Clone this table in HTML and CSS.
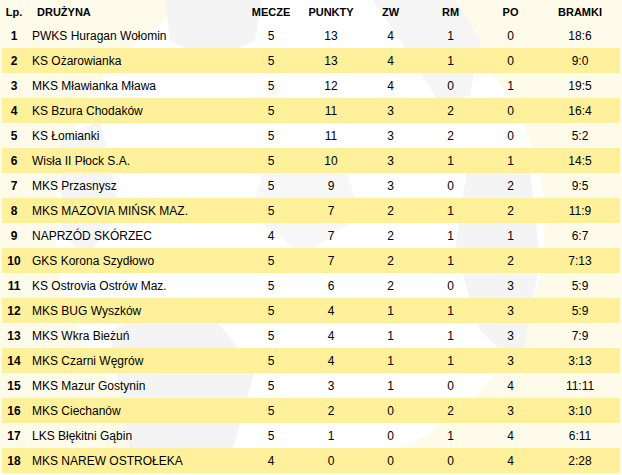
FILE: index.html
```html
<!DOCTYPE html>
<html lang="pl">
<head>
<meta charset="utf-8">
<title>Tabela</title>
<link rel="stylesheet" href="styles.css">
</head>
<body>
<div class="wrap">
  <svg class="ball" width="622" height="475" viewBox="0 0 622 475" aria-hidden="true">
    <circle cx="300" cy="225" r="245" fill="#ffffff"/>
    <polygon points="165,0 262,0 255,40 210,62 170,40" fill="#f4f4f4"/>
    <path d="M372,0 C395,30 420,70 440,105 L470,95 L480,40 L455,0 Z" fill="#f5f5f5"/>
    <polygon points="470,150 530,170 540,260 520,370 480,330 455,250" fill="#f4f4f4"/>
    <polygon points="110,330 200,300 255,370 230,460 130,455" fill="#f4f4f4"/>
    <polygon points="60,140 100,120 120,210 85,260 62,230" fill="#f5f5f5"/>
    <polygon points="270,150 340,150 360,215 305,255 250,215" fill="#f7f7f7"/>
  </svg>
  <table class="standings">
    <colgroup>
      <col class="c-lp"><col class="c-team"><col class="c-num"><col class="c-num"><col class="c-num2"><col class="c-num3"><col class="c-num2"><col class="c-goals">
    </colgroup>
    <thead>
      <tr><th>Lp.</th><th class="team">DRUŻYNA</th><th>MECZE</th><th>PUNKTY</th><th>ZW</th><th>RM</th><th>PO</th><th>BRAMKI</th></tr>
    </thead>
    <tbody>
      <tr><td class="lp">1</td><td class="team">PWKS Huragan Wołomin</td><td>5</td><td>13</td><td>4</td><td>1</td><td>0</td><td>18:6</td></tr>
      <tr><td class="lp">2</td><td class="team">KS Ożarowianka</td><td>5</td><td>13</td><td>4</td><td>1</td><td>0</td><td>9:0</td></tr>
      <tr><td class="lp">3</td><td class="team">MKS Mławianka Mława</td><td>5</td><td>12</td><td>4</td><td>0</td><td>1</td><td>19:5</td></tr>
      <tr><td class="lp">4</td><td class="team">KS Bzura Chodaków</td><td>5</td><td>11</td><td>3</td><td>2</td><td>0</td><td>16:4</td></tr>
      <tr><td class="lp">5</td><td class="team">KS Łomianki</td><td>5</td><td>11</td><td>3</td><td>2</td><td>0</td><td>5:2</td></tr>
      <tr><td class="lp">6</td><td class="team">Wisła II Płock S.A.</td><td>5</td><td>10</td><td>3</td><td>1</td><td>1</td><td>14:5</td></tr>
      <tr><td class="lp">7</td><td class="team">MKS Przasnysz</td><td>5</td><td>9</td><td>3</td><td>0</td><td>2</td><td>9:5</td></tr>
      <tr><td class="lp">8</td><td class="team">MKS MAZOVIA MIŃSK MAZ.</td><td>5</td><td>7</td><td>2</td><td>1</td><td>2</td><td>11:9</td></tr>
      <tr><td class="lp">9</td><td class="team">NAPRZÓD SKÓRZEC</td><td>4</td><td>7</td><td>2</td><td>1</td><td>1</td><td>6:7</td></tr>
      <tr><td class="lp">10</td><td class="team">GKS Korona Szydłowo</td><td>5</td><td>7</td><td>2</td><td>1</td><td>2</td><td>7:13</td></tr>
      <tr><td class="lp">11</td><td class="team">KS Ostrovia Ostrów Maz.</td><td>5</td><td>6</td><td>2</td><td>0</td><td>3</td><td>5:9</td></tr>
      <tr><td class="lp">12</td><td class="team">MKS BUG Wyszków</td><td>5</td><td>4</td><td>1</td><td>1</td><td>3</td><td>5:9</td></tr>
      <tr><td class="lp">13</td><td class="team">MKS Wkra Bieżuń</td><td>5</td><td>4</td><td>1</td><td>1</td><td>3</td><td>7:9</td></tr>
      <tr><td class="lp">14</td><td class="team">MKS Czarni Węgrów</td><td>5</td><td>4</td><td>1</td><td>1</td><td>3</td><td>3:13</td></tr>
      <tr><td class="lp">15</td><td class="team">MKS Mazur Gostynin</td><td>5</td><td>3</td><td>1</td><td>0</td><td>4</td><td>11:11</td></tr>
      <tr><td class="lp">16</td><td class="team">MKS Ciechanów</td><td>5</td><td>2</td><td>0</td><td>2</td><td>3</td><td>3:10</td></tr>
      <tr><td class="lp">17</td><td class="team">LKS Błękitni Gąbin</td><td>5</td><td>1</td><td>0</td><td>1</td><td>4</td><td>6:11</td></tr>
      <tr><td class="lp">18</td><td class="team">MKS NAREW OSTROŁEKA</td><td>4</td><td>0</td><td>0</td><td>0</td><td>4</td><td>2:28</td></tr>
    </tbody>
  </table>
</div>
</body>
</html>
```
FILE: styles.css
```css
html, body {
  margin: 0;
  padding: 0;
  background: #fffbea;
}
body {
  font-family: "Liberation Sans", Arial, sans-serif;
  color: #000;
}
.wrap {
  position: relative;
  width: 622px;
  height: 475px;
  overflow: hidden;
}
.ball {
  position: absolute;
  left: 0;
  top: 0;
}
.standings {
  position: relative;
  margin-left: 2px;
  width: 618px;
  border-collapse: collapse;
  border-spacing: 0;
  table-layout: fixed;
}
.c-lp { width: 24px; }
.c-team { width: 215px; }
.c-num { width: 60px; }
.c-num2 { width: 59px; }
.c-num3 { width: 61px; }
.c-goals { width: 80px; }

.standings th {
  height: 23px;
  padding: 0;
  font-size: 11px;
  font-weight: bold;
  text-align: center;
  vertical-align: middle;
  color: #000;
}
.standings th.team {
  text-align: left;
  padding-left: 11px;
}
.standings td {
  height: 25px;
  padding: 0;
  font-size: 12px;
  text-align: center;
  vertical-align: middle;
  white-space: nowrap;
}
.standings td.lp {
  font-weight: bold;
}
.standings td.team {
  text-align: left;
  padding-left: 6px;
}
.standings tbody tr:nth-child(even) {
  background: #fff09b;
}
```
